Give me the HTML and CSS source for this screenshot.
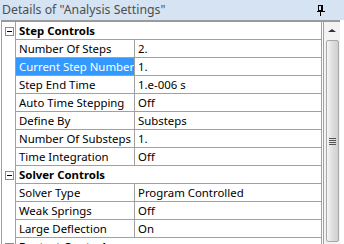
FILE: index.html
```html
<!DOCTYPE html>
<html lang="en">
<head>
  <meta charset="UTF-8" />
  <title>Details of "Analysis Settings"</title>
  <link rel="stylesheet" href="styles.css">
</head>
<body>

<div class="panel">
  <div class="title">
    <span>Details of "Analysis Settings"</span>
    <svg class="pin" width="8" height="11" viewBox="0 0 8 11">
      <rect x="1.5" y="0.5" width="4" height="5" fill="none" stroke="#000"/>
      <rect x="4" y="0" width="2" height="6" fill="#000"/>
      <rect x="0" y="6" width="8" height="1" fill="#000"/>
      <rect x="3" y="7" width="1" height="4" fill="#000"/>
    </svg>
  </div>

  <div class="body">
    <div class="grid">
      <div class="row group">
        <div class="gutter"><span class="toggle"></span></div>
        <div class="label">Step Controls</div>
      </div>
      <div class="row"><div class="gutter"></div><div class="name">Number Of Steps</div><div class="value">2.</div></div>
      <div class="row"><div class="gutter"></div><div class="name selected">Current Step Number</div><div class="value">1.</div></div>
      <div class="row"><div class="gutter"></div><div class="name">Step End Time</div><div class="value">1.e-006 s</div></div>
      <div class="row"><div class="gutter"></div><div class="name">Auto Time Stepping</div><div class="value">Off</div></div>
      <div class="row"><div class="gutter"></div><div class="name">Define By</div><div class="value">Substeps</div></div>
      <div class="row"><div class="gutter"></div><div class="name">Number Of Substeps</div><div class="value">1.</div></div>
      <div class="row"><div class="gutter"></div><div class="name">Time Integration</div><div class="value">Off</div></div>
      <div class="row group">
        <div class="gutter"><span class="toggle"></span></div>
        <div class="label">Solver Controls</div>
      </div>
      <div class="row"><div class="gutter"></div><div class="name">Solver Type</div><div class="value">Program Controlled</div></div>
      <div class="row"><div class="gutter"></div><div class="name">Weak Springs</div><div class="value">Off</div></div>
      <div class="row"><div class="gutter"></div><div class="name">Large Deflection</div><div class="value">On</div></div>
      <div class="row group">
        <div class="gutter"><span class="toggle"></span></div>
        <div class="label">Restart Controls</div>
      </div>
    </div>

    <div class="scrollbar">
      <div class="arrow"></div>
      <div class="thumb"><span class="grip"></span></div>
    </div>
  </div>
</div>

</body>
</html>
```

FILE: styles.css
```css
body {
  margin: 0;
  background: #ffffff;
  font-family: "Noto Sans", "Open Sans", sans-serif;
}
.panel {
  width: 344px;
  height: 244px;
  overflow: hidden;
  background: #ffffff;
}
.title {
  height: 20px;
  background: #d5e3f2;
  color: #4e4e4e;
  font-size: 12.3px;
  line-height: 20px;
  padding: 0 0 0 2px;
  display: flex;
  justify-content: space-between;
  align-items: center;
}
.pin {
  margin-right: 19px;
}
.body {
  display: flex;
  border-top: 2px solid #9a9a9a;
  margin-left: 1px;
  margin-right: 4px;
}
.grid {
  width: 320px;
  border-left: 1px solid #a0a0a0;
  font-size: 11.4px;
  color: #000;
}
.row {
  display: flex;
  height: 18px;
}
.gutter {
  width: 12px;
  flex: none;
  border-right: 1px solid #a0a0a0;
  display: flex;
  align-items: center;
  justify-content: center;
  padding-left: 1px;
}
.toggle {
  width: 7px;
  height: 7px;
  border: 1px solid #8a8a8a;
  position: relative;
  background: #fff;
}
.toggle::after {
  content: "";
  position: absolute;
  left: 1px;
  top: 3px;
  width: 5px;
  height: 1px;
  background: #000;
}
.name, .value, .label {
  height: 17px;
  line-height: 17px;
  border-bottom: 1px solid #a0a0a0;
  border-right: 1px solid #a0a0a0;
  white-space: nowrap;
  overflow: hidden;
}
.name {
  width: 115px;
  flex: none;
  padding-left: 3px;
}
.name.selected {
  background: #3399ff;
  color: #ffffff;
}
.value {
  flex: 1;
  padding-left: 3px;
}
.label {
  flex: 1;
  font-weight: bold;
  padding-left: 3px;
}
.scrollbar {
  width: 16px;
  margin-left: 1px;
  border-left: 1px solid #a0a0a0;
  background: #f3f3f3;
  display: flex;
  flex-direction: column;
  align-items: center;
}
.arrow {
  margin-top: 7px;
  width: 0;
  height: 0;
  border-left: 4px solid transparent;
  border-right: 4px solid transparent;
  border-bottom: 3px solid #333;
}
.thumb {
  margin-top: 8px;
  width: 11px;
  height: 200px;
  border: 1px solid #a8a8a8;
  border-radius: 2px;
  background: linear-gradient(to right, #f6f6f6, #e2e2e2 40%, #cfcfcf);
  display: flex;
  align-items: center;
  justify-content: center;
}
.grip {
  width: 7px;
  height: 7px;
  background: repeating-linear-gradient(to bottom, #555 0, #555 1px, transparent 1px, transparent 2px);
}
```
